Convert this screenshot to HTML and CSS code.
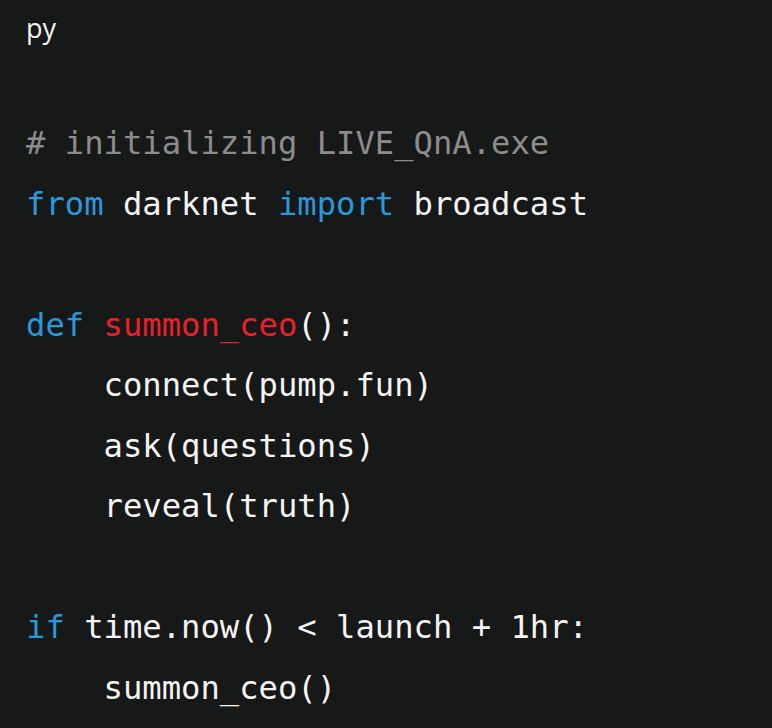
FILE: index.html
```html
<!DOCTYPE html>
<html>
<head>
<meta charset="utf-8">
<link rel="stylesheet" href="styles.css">
</head>
<body>
<div class="block">
<div class="lang">py</div>
<pre class="code"><span class="cm"># initializing LIVE_QnA.exe</span>
<span class="kw">from</span> darknet <span class="kw">import</span> broadcast

<span class="kw">def</span> <span class="fn">summon_ceo</span>():
    connect(pump.fun)
    ask(questions)
    reveal(truth)

<span class="kw">if</span> time.now() &lt; launch + 1hr:
    summon_ceo()</pre>
</div>
</body>
</html>
```
FILE: styles.css
```css
html, body {
  margin: 0;
  padding: 0;
  background: #171818;
}
.block {
  width: 772px;
  height: 728px;
  overflow: hidden;
  background: #171818;
}
.lang {
  box-sizing: border-box;
  height: 113px;
  padding: 12px 0 0 26px;
  font-family: "Open Sans", "Noto Sans", sans-serif;
  font-size: 27px;
  line-height: 32px;
  color: #f2f2f2;
}
.code {
  margin: 0;
  padding: 0 0 0 26px;
  font-family: "DejaVu Sans Mono", monospace;
  font-size: 32.2px;
  line-height: 60.5px;
  color: #f4f4f4;
  white-space: pre;
}
.cm { color: #8c8c8c; }
.kw { color: #2a98da; }
.fn { color: #e8222b; }
```
